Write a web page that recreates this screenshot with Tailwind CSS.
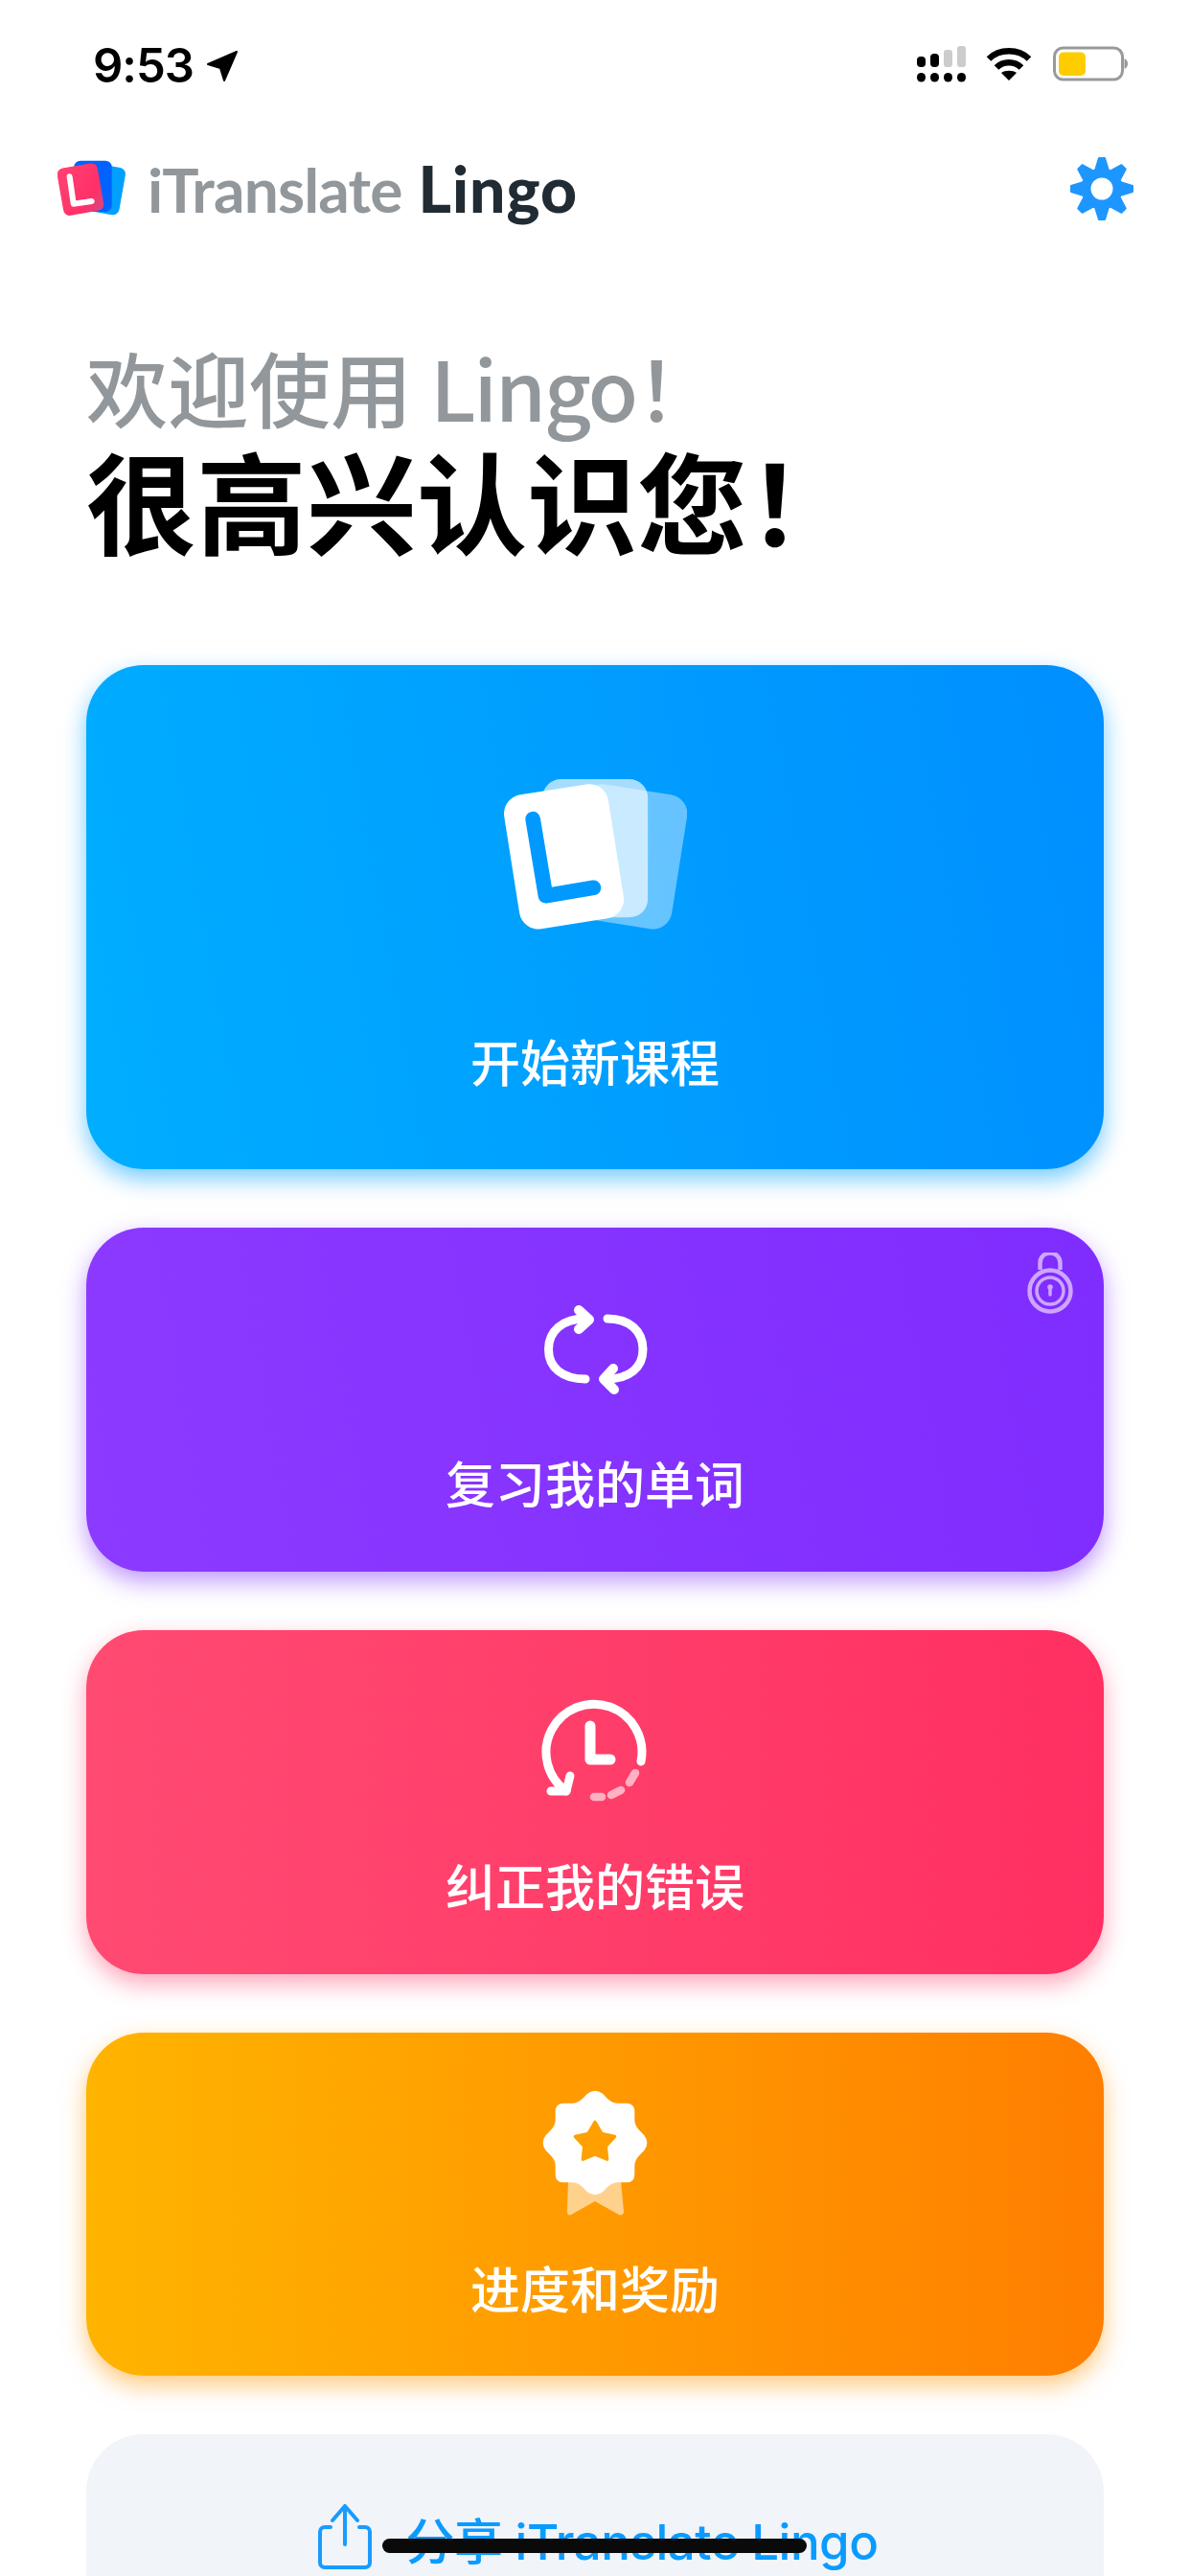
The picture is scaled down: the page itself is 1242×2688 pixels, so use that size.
<!DOCTYPE html>
<html lang="zh-CN">
<head>
  <meta charset="UTF-8" />
  <meta name="viewport" content="width=device-width, initial-scale=1.0" />
  <title>iTranslate Lingo</title>
  <script src="https://cdn.jsdelivr.net/npm/@tailwindcss/browser@4"></script>
</head>
<body class="bg-white font-['Inter','Noto_Sans_CJK_SC',sans-serif]">
  <div class="relative h-[2688px] w-[1242px] overflow-hidden">

    <!-- status bar -->
    <div class="flex h-[134px] items-start justify-between pt-[48px] pl-[97px] pr-[65px]">
      <div class="flex items-center gap-[13px]">
        <span class="text-[49px] leading-[42px] font-semibold tracking-[-1px] text-black">9:53</span>
        <svg width="34" height="34" viewBox="0 0 34 34"><path d="M32 2 L2 15 L15 19 L19 32 Z" fill="#000" stroke="#000" stroke-width="2" stroke-linejoin="round"/></svg>
      </div>
      <div class="flex items-center gap-[20px]">
        <svg width="52" height="38" viewBox="0 0 52 38">
          <g fill="#000">
            <rect x="0" y="11" width="9" height="11" rx="4"/>
            <rect x="14" y="8" width="9" height="14" rx="4"/>
            <rect x="0" y="28" width="9" height="9.500" rx="4.500"/>
            <rect x="14" y="28" width="9" height="9.500" rx="4.500"/>
            <rect x="28" y="28" width="9" height="9.500" rx="4.500"/>
            <rect x="42" y="28" width="9" height="9.500" rx="4.500"/>
          </g>
          <g fill="#ccc">
            <rect x="28" y="4" width="9" height="18" rx="3"/>
            <rect x="42" y="0" width="9" height="22" rx="3"/>
          </g>
        </svg>
        <svg width="48" height="36" viewBox="0 0 48 36" fill="none" stroke="#000" stroke-width="6.500">
          <path d="M3 12.500 C14 1.500 34 1.500 45 12.500"/>
          <path d="M11 21.500 C18 14.500 30 14.500 37 21.500"/>
          <path d="M24 35 L16 27 C20 24 28 24 32 27 Z" fill="#000" stroke="none"/>
        </svg>
        <svg width="78" height="38" viewBox="0 0 78 38" class="ml-[2px]">
          <rect x="1.500" y="2" width="71" height="33" rx="9" fill="none" stroke="#999" stroke-width="3"/>
          <rect x="6" y="6.500" width="28" height="24.500" rx="5" fill="#ffcc00"/>
          <path d="M74.500 13 C77 14 78 16 78 18.500 C78 21 77 23 74.500 24 Z" fill="#999"/>
        </svg>
      </div>
    </div>

    <!-- header -->
    <div class="flex h-[126px] items-center justify-between pl-[60px] pr-[59px]">
      <div class="flex items-center gap-[22px]">
        <svg width="72" height="60" viewBox="30 28 216 180">
          <defs>
            <linearGradient id="logoPink" x1="0" y1="0" x2="1" y2="1">
              <stop offset="0" stop-color="#ff4272"/>
              <stop offset="0.7" stop-color="#ff3068"/>
              <stop offset="1" stop-color="#cf4a85"/>
            </linearGradient>
          </defs>
          <rect x="106" y="43" width="128" height="150" rx="20" fill="#00a0ff" transform="rotate(10 170 118)"/>
          <rect x="82" y="30" width="118" height="160" rx="20" fill="#0062ff"/>
          <rect x="38" y="45" width="128" height="150" rx="20" fill="url(#logoPink)" transform="rotate(-10 102 120)"/>
          <path d="M68 80 L80 165 L137 157" fill="none" stroke="#fff" stroke-width="18" stroke-linecap="round" stroke-linejoin="round"/>
        </svg>
        <div class="text-[64px] leading-[76px] font-['Lato',sans-serif] font-bold tracking-[-0.8px]">
          <span class="text-[#92979b]">iTranslate</span>
          <span class="ml-[2px] text-[66px] font-black tracking-[1px] text-[#212b33]">Lingo</span>
        </div>
      </div>
      <svg width="66" height="68" viewBox="-33 -34 66 68">
        <circle r="16.500" fill="none" stroke="#1e96ff" stroke-width="10"/>
        <g fill="#1e96ff" stroke="#1e96ff" stroke-width="2" stroke-linejoin="round">
          <path d="M-7 -19 L-3 -32 H3 L7 -19 Z"/>
          <path d="M-7 -19 L-3 -32 H3 L7 -19 Z" transform="rotate(45)"/>
          <path d="M-7 -19 L-3 -32 H3 L7 -19 Z" transform="rotate(90)"/>
          <path d="M-7 -19 L-3 -32 H3 L7 -19 Z" transform="rotate(135)"/>
          <path d="M-7 -19 L-3 -32 H3 L7 -19 Z" transform="rotate(180)"/>
          <path d="M-7 -19 L-3 -32 H3 L7 -19 Z" transform="rotate(225)"/>
          <path d="M-7 -19 L-3 -32 H3 L7 -19 Z" transform="rotate(270)"/>
          <path d="M-7 -19 L-3 -32 H3 L7 -19 Z" transform="rotate(315)"/>
        </g>
      </svg>
    </div>

    <!-- greeting -->
    <div class="flex h-[434px] flex-col pl-[90px] pt-[93px] font-['Noto_Sans_CJK_SC',sans-serif]">
      <p class="text-[85px] leading-[100px] font-medium text-[#92979b]">欢迎使用 <span class="tracking-[-2px]">Lingo！</span></p>
      <p class="mt-[2px] text-[115px] leading-[130px] font-semibold text-black">很高兴认识您！</p>
    </div>

    <!-- cards -->
    <div class="flex flex-col gap-[61px] px-[90px]">
      <button class="flex h-[526px] flex-col items-center rounded-[60px] bg-linear-[80deg] from-[#00aeff] to-[#008fff] pt-[119px] shadow-[0_10px_24px_rgba(0,160,255,0.55)]">
        <svg width="192" height="158" viewBox="258 100 573 474">
          <rect x="481" y="130" width="330" height="425" rx="60" fill="#fff" fill-opacity="0.4" transform="rotate(9 646 342)"/>
          <rect x="380" y="100" width="330" height="433" rx="58" fill="#fff" fill-opacity="0.65"/>
          <rect x="282" y="130" width="330" height="425" rx="60" fill="#fff" transform="rotate(-9 447 342)"/>
          <path d="M350 225 L390 465 L540 440" fill="none" stroke="#0099ff" stroke-width="47" stroke-linecap="round" stroke-linejoin="round"/>
        </svg>
        <span class="mt-[105px] text-[52px] leading-[70px] font-medium text-white">开始新课程</span>
      </button>

      <button class="relative flex h-[359px] flex-col items-center rounded-[60px] bg-linear-[80deg] from-[#8c3aff] to-[#7f2cff] pt-[74px] shadow-[0_10px_24px_rgba(130,50,255,0.5)]">
        <svg class="absolute top-[26px] right-[32px]" width="48" height="64" viewBox="1071 1307 48 64" fill="none" stroke="#cca6ff">
          <path d="M1084.500 1325 V1318 C1084.500 1304 1105.500 1304 1105.500 1318 V1325" stroke-width="4.500"/>
          <circle cx="1095" cy="1347" r="21.500" stroke-width="4.500"/>
          <circle cx="1095" cy="1347" r="14" stroke-width="3.500"/>
          <circle cx="1095" cy="1343" r="2.800" fill="#cca6ff" stroke="none"/>
          <path d="M1095 1344 V1351" stroke-width="3.500" stroke-linecap="round"/>
        </svg>
        <svg width="120" height="105" viewBox="560 1355 120 105" fill="none" stroke="#fff" stroke-linecap="round" stroke-linejoin="round">
          <path d="M610 1376 C586 1376 571.500 1389 571.500 1408 C571.500 1427 586 1439 610 1439" stroke-width="9"/>
          <path d="M633 1376 C656 1376 670 1389 670 1408 C670 1427 656 1439 632 1439" stroke-width="9"/>
          <path d="M603 1367 L614 1377 L603 1387" stroke-width="10"/>
          <path d="M639 1428 L629 1439 L640 1450" stroke-width="10"/>
        </svg>
        <span class="mt-[56px] text-[52px] leading-[70px] font-medium text-white">复习我的单词</span>
      </button>

      <button class="flex h-[359px] flex-col items-center rounded-[60px] bg-linear-to-r from-[#ff4a72] to-[#ff2f62] pt-[66px] shadow-[0_10px_24px_rgba(255,60,105,0.45)]">
        <svg width="120" height="120" viewBox="561 1769 120 120" fill="none" stroke="#fff" stroke-linecap="round" stroke-linejoin="round">
          <path d="M669 1840 A50 50 0 1 0 591 1871" stroke-width="9"/>
          <path d="M595 1855 L591 1871 L575 1871" stroke-width="9"/>
          <path d="M616 1803 V1838 H637" stroke-width="11"/>
          <g stroke-width="8.500" stroke-opacity="0.6">
            <path d="M663 1852 L657 1862"/>
            <path d="M648 1870 L638 1875"/>
            <path d="M628 1877 L620 1877"/>
          </g>
        </svg>
        <span class="mt-[49px] text-[52px] leading-[70px] font-medium text-white">纠正我的错误</span>
      </button>

      <button class="flex h-[358px] flex-col items-center rounded-[60px] bg-linear-to-r from-[#ffb400] to-[#ff7e00] pt-[60px] shadow-[0_10px_24px_rgba(255,150,0,0.5)]">
        <svg width="112" height="132" viewBox="565 2181 112 132">
          <path d="M593 2275 L592 2308 C592 2311 594 2312 596 2311 L621 2297 L646 2311 C648 2312 651 2311 651 2308 L648 2275 Z" fill="#fff" fill-opacity="0.55"/>
          <path transform="translate(621 2236) scale(0.3333)" fill="#fff" d="M-24 -154 Q0 -172 24 -154 C36 -142 50 -124 72 -124 L98 -124 Q124 -124 124 -98 L124 -72 C124 -50 142 -36 154 -24 Q172 0 154 24 C142 36 124 50 124 72 L124 98 Q124 124 98 124 L72 124 C50 124 36 142 24 154 Q0 172 -24 154 C-36 142 -50 124 -72 124 L-98 124 Q-124 124 -124 98 L-124 72 C-124 50 -142 36 -154 24 Q-172 0 -154 -24 C-142 -36 -124 -50 -124 -72 L-124 -98 Q-124 -124 -98 -124 L-72 -124 C-50 -124 -36 -142 -24 -154 Z"/>
          <path transform="translate(621 2236) scale(0.3333)" fill="#ff9f00" stroke="#ff9f00" stroke-width="10" stroke-linejoin="round" d="M0 -65 L21 -29 L62 -20 L34 11 L38 52 L0 36 L-38 52 L-34 11 L-62 -20 L-21 -29 Z"/>
        </svg>
        <span class="mt-[43px] text-[52px] leading-[70px] font-medium text-white">进度和奖励</span>
      </button>

      <button class="flex h-[300px] items-start justify-center gap-[36px] rounded-[60px] bg-[#f1f4f8] pl-[6px] pt-[73px]">
        <svg width="56" height="68" viewBox="0 0 56 68" fill="none" stroke="#1a9bff" stroke-width="4" stroke-linecap="round" stroke-linejoin="round">
          <path d="M28 42 V2 M15 17 L28 2 L41 17"/>
          <path d="M13 24 H7 C4 24 2 26 2 29 V61 C2 64 4 66 7 66 H49 C52 66 54 64 54 61 V29 C54 26 52 24 49 24 H43"/>
        </svg>
        <span class="mt-[5px] text-[51px] leading-[70px] font-medium tracking-[-0.5px] text-[#0a9bff]">分享 iTranslate Lingo</span>
      </button>
    </div>

    <!-- home indicator -->
    <div class="absolute top-[2649px] left-[399px] h-[15px] w-[443px] rounded-full bg-[#0a0a0a]"></div>
  </div>
</body>
</html>
